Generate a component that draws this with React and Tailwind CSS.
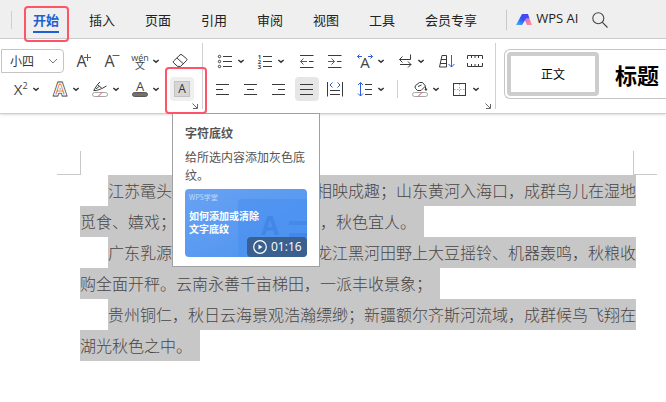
import { useState } from 'react';

const tabs = ['开始', '插入', '页面', '引用', '审阅', '视图', '工具', '会员专享'];

// '~' marks the part of a line that stays empty behind the tooltip
const paragraphs = [
  ['江苏鼋头~相映成趣;山东黄河入海口,成群鸟儿在湿地', '觅食、嬉戏;~,秋色宜人。'],
  ['广东乳源~龙江黑河田野上大豆摇铃、机器轰鸣,秋粮收', '购全面开秤。云南永善千亩梯田,一派丰收景象;'],
  ['贵州铜仁,秋日云海景观浩瀚缥缈;新疆额尔齐斯河流域,成群候鸟飞翔在', '湖光秋色之中。'],
];

const fullWidth = (text) => text.replace(/,/g, '\uFF0C').replace(/;/g, '\uFF1B');

const Line = ({ text, className }) => {
  const [before, after] = fullWidth(text).split('~');
  return (
    <span className={`block w-fit bg-[#c7c7c7] ${className}`}>
      {before}
      {after && <span className="inline-block w-36" />}
      {after}
    </span>
  );
};

const Icon = ({ children }) => (
  <svg className="h-6 w-6 shrink-0" viewBox="0 0 24 24" fill="none" stroke="#3a3a3a" strokeWidth="1" aria-hidden="true">
    {children}
  </svg>
);

const Letter = ({ x, y, size, children }) => (
  <text x={x} y={y} fontSize={size} textAnchor="middle" fill="#444" stroke="none" fontFamily="'Open Sans', sans-serif">
    {children}
  </text>
);

const Tool = ({ label, active, children }) => (
  <div className="flex h-7 w-7 shrink-0 items-center justify-center">
    <button type="button" aria-label={label} className={`h-6 w-6 rounded ${active ? 'bg-[#e6e6e6]' : ''}`}>
      <Icon>{children}</Icon>
    </button>
  </div>
);

const SplitTool = ({ label, children }) => (
  <button type="button" aria-label={label} className="flex h-7 w-10 shrink-0 items-center pl-0.5">
    <Icon>{children}</Icon>
    <svg className="h-2 w-2 shrink-0" viewBox="0 0 8 8" fill="none" stroke="#3a3a3a" strokeWidth="1.5" aria-hidden="true">
      <path d="M1.3 3 4 5.2 6.7 3" />
    </svg>
  </button>
);

const Launcher = ({ label }) => (
  <div className="flex justify-end pr-1">
    <button type="button" aria-label={label} className="h-1.5 w-1.5">
      <svg viewBox="0 0 6 6" className="h-1.5 w-1.5" fill="none" stroke="#666" aria-hidden="true">
        <path d="M.5 .5 5 5M5.5 1v4.5H1" />
      </svg>
    </button>
  </div>
);

const NoColorBar = () => (
  <>
    <rect x="4.5" y="15.5" width="15" height="4" rx="2" fill="#fff" stroke="#a5a5a5" />
    <path d="M10 19.5l4-4" stroke="#ee4a4a" />
  </>
);

const Tooltip = () => (
  <div role="tooltip" className="absolute top-[38px] left-1 z-20 w-[148px] border border-[#a0a0a0] bg-white px-3 pt-[11px] pb-[9px] text-xs text-[#555]">
    <div className="font-bold text-[#555]">字符底纹</div>
    <p className="mt-[7px] leading-[18px]">给所选内容添加灰色底纹。</p>
    <div className="relative mt-[5px] h-[68px] overflow-hidden rounded bg-linear-to-br from-[#68a2f3] to-[#4d93ee] pt-1 pl-1 text-white">
      <svg className="absolute inset-0 h-full w-full" viewBox="0 0 122 68" aria-hidden="true">
        <rect x="53" y="10" width="80" height="70" rx="4" fill="#4a90f0" opacity=".65" />
        <text x="76" y="46" fontSize="26" fontWeight="bold" fill="#3b80e4" opacity=".6" fontFamily="'Open Sans', sans-serif">A</text>
        <path d="M104 34h18M104 46h18" stroke="#3b80e4" strokeWidth="4" opacity=".5" />
      </svg>
      <div className="relative text-[7px] leading-2 opacity-60">WPS学堂</div>
      <div className="relative mt-2 text-[10px] leading-[13px] font-bold whitespace-nowrap">
        如何添加或清除
        <br />
        文字底纹
      </div>
      <div className="absolute right-0 bottom-0 flex h-5 w-[60px] items-center gap-1 rounded bg-[#3a608f] pl-1.5 font-['Open_Sans',sans-serif]">
        <svg className="h-3.5 w-3.5 shrink-0" viewBox="0 0 14 14" fill="none" stroke="#fff" aria-hidden="true">
          <circle cx="7" cy="7" r="6.3" strokeWidth="1.2" />
          <path d="M5.5 4.5v5L9.5 7z" fill="#fff" stroke="none" />
        </svg>
        01:16
      </div>
    </div>
  </div>
);

const FontGroup = ({ size, setSize }) => (
  <div className="flex shrink-0 flex-col pt-2">
    <div className="flex items-center">
      <div className="relative mr-1.5 flex items-center">
        <select
          aria-label="字号"
          value={size}
          onChange={(e) => setSize(e.target.value)}
          className="ml-px h-6 w-[63px] appearance-none rounded-r border border-[#c4c4c4] bg-white pl-2 text-xs text-[#333]"
        >
          <option>小四</option>
          <option>四号</option>
          <option>五号</option>
        </select>
        <svg className="pointer-events-none absolute right-1.5 h-2.5 w-2.5" viewBox="0 0 10 10" fill="none" stroke="#777" aria-hidden="true">
          <path d="M1 3l4 4 4-4" />
        </svg>
      </div>
      <Tool label="增大字号">
        <Letter x="9.5" y="18" size="16">A</Letter>
        <path d="M15.5 5v7M12 8.5h7" stroke="#2f5bd8" />
      </Tool>
      <Tool label="减小字号">
        <Letter x="9.5" y="18" size="16">A</Letter>
        <path d="M12.5 6.5h7" stroke="#2f5bd8" />
      </Tool>
      <SplitTool label="拼音指南">
        <Letter x="12" y="12" size="9">wén</Letter>
        <text x="12" y="20" fontSize="10" textAnchor="middle" fill="#444" stroke="none">文</text>
      </SplitTool>
      <Tool label="清除格式">
        <path d="M5.6 12 12 5.9q1-.9 2 0l4.6 3.8q.9.9 0 1.8L12.6 17.4h-3L5.6 13.8q-.9-.9 0-1.8zM9 9l6.2 5.6" />
      </Tool>
    </div>
    <div className="flex items-center pr-1 pl-1.5">
      <SplitTool label="上标">
        <Letter x="10" y="17.5" size="15">X</Letter>
        <Letter x="17" y="12" size="9">2</Letter>
      </SplitTool>
      <SplitTool label="文字效果">
        <text x="12" y="18" fontSize="16" fontWeight="bold" textAnchor="middle" fill="#444" strokeWidth="2.8" fontFamily="'Open Sans', sans-serif">A</text>
        <text x="12" y="18" fontSize="16" fontWeight="bold" textAnchor="middle" fill="#d9672c" stroke="#fff" strokeWidth="1.2" fontFamily="'Open Sans', sans-serif">A</text>
      </SplitTool>
      <SplitTool label="突出显示">
        <path d="M5.5 13.5h3l5-1.8M6 13 9.5 7.5l4.5 4M9.5 7.5 12 5M14 11.500l4.500-2.500M8 12l3-2.500" />
        <NoColorBar />
      </SplitTool>
      <SplitTool label="字体颜色">
        <Letter x="12" y="14" size="13">A</Letter>
        <rect x="4.5" y="15.5" width="15" height="4" rx="2" fill="#757070" stroke="#5c5858" />
      </SplitTool>
      <div className="relative mx-0.5 flex h-7 w-7 items-center justify-center">
        <button type="button" aria-label="字符底纹" className="flex h-6 w-6 items-center justify-center rounded bg-[#efefef]">
          <span className="h-4 w-4 border border-[#c2c2c2] bg-[#d6d6d6] font-['Open_Sans',sans-serif] text-xs leading-[14px] text-[#333]">A</span>
        </button>
        <div className="pointer-events-none absolute -top-2 -right-[11px] -bottom-[11px] -left-[3px] z-30 rounded-sm border-2 border-[#ff5468]" />
        <Tooltip />
      </div>
    </div>
    <Launcher label="字体设置" />
  </div>
);

const ParagraphGroup = () => (
  <div className="flex shrink-0 flex-col pt-2">
    <div className="flex items-center pr-1.5 pl-2">
      <SplitTool label="项目符号">
        <circle cx="6.5" cy="7.5" r="1.2" />
        <circle cx="6.5" cy="12.5" r="1.2" />
        <circle cx="6.5" cy="17.5" r="1.2" />
        <path d="M10 7.5h9M10 12.5h9M10 17.5h9" />
      </SplitTool>
      <SplitTool label="编号">
        <g fontWeight="bold">
          <Letter x="6.5" y="9.5" size="6">1</Letter>
          <Letter x="6.5" y="14.5" size="6">2</Letter>
          <Letter x="6.5" y="19.5" size="6">3</Letter>
        </g>
        <path d="M10 7.5h9M10 12.5h9M10 17.5h9" />
      </SplitTool>
      <div className="flex px-0.5">
        <Tool label="减少缩进量">
          <path d="M5 6.5h13.5M5 18.5h13.5M14 12.5h4.5" />
          <path d="M12 12.5H5.5M8.5 9.5l-3 3 3 3" stroke="#2f5bd8" />
        </Tool>
        <Tool label="增加缩进量">
          <path d="M5 6.5h13.5M5 18.5h13.5M14 12.5h4.5" />
          <path d="M5 12.5h6.5M8.5 9.5l3 3-3 3" stroke="#2f5bd8" />
        </Tool>
      </div>
      <SplitTool label="中文版式">
        <Letter x="12" y="19" size="15">A</Letter>
        <path d="M9 7.5H4.5M6.5 5.5l-2 2 2 2M15 7.5h4.5M17.5 5.5l2 2-2 2" stroke="#2f5bd8" />
      </SplitTool>
      <SplitTool label="换行标记">
        <path d="M17.5 5.5v5H6.5M9.5 7.5l-3 3 3 3M7 15.5h11M15 12.5l3 3-3 3" />
      </SplitTool>
      <div className="flex pl-0.5">
        <Tool label="排序">
          <path d="M4.5 18 7 6.5h4.5V18zM6 10.5h5.5M5.3 14.5h6" />
          <path d="M16.5 6v12M13.5 15l3 3 3-3" stroke="#2f5bd8" />
        </Tool>
        <Tool label="制表位">
          <path d="M4.5 10V6.5h15V10M4.5 14v3.5h15V14M8.5 6.5V9M12 6.5V9M15.5 6.500V9M8.500 15v2.500M12 15v2.500M15.500 15v2.500" />
        </Tool>
      </div>
    </div>
    <div className="flex items-center pl-1.5">
      <Tool label="左对齐">
        <path d="M5 7.5h13M5 12.5h7M5 17.5h13" />
      </Tool>
      <Tool label="居中对齐">
        <path d="M5 7.5h13M8 12.5h7M5 17.5h13" />
      </Tool>
      <Tool label="右对齐">
        <path d="M5 7.5h13M11 12.5h7M5 17.5h13" />
      </Tool>
      <Tool label="两端对齐" active>
        <path d="M5 7.5h13M5 12.5h13M5 17.5h13" />
      </Tool>
      <Tool label="分散对齐">
        <path d="M4.5 5v14.5M19.5 5v14.5M7 13.5h10M7 17.5h10" />
        <path d="M9.5 5.5 7 8l2.5 2.5M14.5 5.5 17 8l-2.5 2.5" stroke="#2f5bd8" />
      </Tool>
      <div className="flex pl-0.5">
        <SplitTool label="行距">
          <path d="M7.5 5.5V19M5 8l2.5-2.5L10 8M5 16.5 7.5 19l2.5-2.5" stroke="#2f5bd8" />
          <path d="M12 7.5h7M12 12.5h7M12 17.5h7" />
        </SplitTool>
      </div>
      <div className="mr-2 ml-1.5 h-[18px] w-px bg-[#d0d0d0]" />
      <SplitTool label="底纹颜色">
        <path d="M7.5 8.5l4-3h3l3 3.5-4.500 4.500h-3.500L7.500 11.500q-1-1.500 0-3zM10 9.500 13.500 8M17.500 9.500v3" />
        <circle cx="18" cy="12.5" r=".8" fill="#3a3a3a" />
        <NoColorBar />
      </SplitTool>
      <SplitTool label="边框">
        <path d="M11.5 7v11M6 12.5h11" stroke="#aaa" strokeDasharray="1.5 1.5" />
        <rect x="5.5" y="6.5" width="12" height="12" />
      </SplitTool>
    </div>
    <Launcher label="段落设置" />
  </div>
);

export default function App() {
  const [size, setSize] = useState('小四');

  return (
    <div className="min-h-screen overflow-x-clip bg-white font-['Noto_Sans_CJK_SC',sans-serif]">
      <nav className="flex h-[39px] items-center border-b border-[#cfcfcf] bg-[#efefef] pt-0.5 pl-[11px] text-[13px] text-[#222]">
        <div className="mr-[21px] h-[18px] w-px shrink-0 bg-[#cfcfcf]" />
        <div className="flex shrink-0 gap-[30px]">
          {tabs.map((tab, i) => (
            <button
              key={tab}
              type="button"
              className={`relative border-b-2 pt-[3px] pb-px leading-5 ${
                i === 0 ? 'border-[#1f5fd0] font-bold text-[#1f5fd0]' : 'border-transparent'
              }`}
            >
              {tab}
              {i === 0 && (
                <span className="pointer-events-none absolute -top-px -right-[10px] -bottom-[11px] -left-[9px] z-10 rounded-sm border-2 border-[#ff5468]" />
              )}
            </button>
          ))}
        </div>
        <div className="mr-[9px] ml-[29px] h-5 w-px shrink-0 bg-[#c8c8c8]" />
        <button type="button" className="flex shrink-0 items-center gap-1 pb-0.5 font-['Open_Sans',sans-serif]">
          <svg className="h-4 w-4" viewBox="0 0 16 16" aria-hidden="true">
            <defs>
              <linearGradient id="aiBlue" x1="0" y1="1" x2="1" y2="0">
                <stop offset="0" stopColor="#45b8ff" />
                <stop offset=".5" stopColor="#2c56f5" />
                <stop offset="1" stopColor="#5a3df0" />
              </linearGradient>
              <linearGradient id="aiPink" x1="0" y1="0" x2="1" y2="1">
                <stop offset="0" stopColor="#e05cf5" />
                <stop offset="1" stopColor="#ff9a7a" />
              </linearGradient>
            </defs>
            <path d="M8 7.5h5.5L16 14h-5z" fill="url(#aiPink)" />
            <path d="M6 3h6l1.5 4.500H10L6 14H0z" fill="url(#aiBlue)" />
          </svg>
          WPS AI
        </button>
        <button type="button" aria-label="搜索" className="ml-3.5 shrink-0">
          <svg className="h-4 w-4" viewBox="0 0 16 16" fill="none" stroke="#444" strokeWidth="1.1" aria-hidden="true">
            <circle cx="6.3" cy="6.3" r="5.5" />
            <path d="M10.2 10.2l5.3 5.3" />
          </svg>
        </button>
      </nav>

      <div className="flex h-[75px] border-b border-[#cfcfcf] bg-white shadow-sm">
        <FontGroup size={size} setSize={setSize} />
        <div className="my-1 w-px shrink-0 bg-[#d0d0d0]" />
        <ParagraphGroup />
        <div className="my-1 w-px shrink-0 bg-[#d0d0d0]" />
        <div className="mt-2.5 ml-2 flex min-w-0 flex-1 items-center gap-4 self-start overflow-hidden rounded-l-md border border-r-0 border-[#c5c5c5] p-0.5 text-black">
          <button type="button" className="h-11 w-[92px] shrink-0 rounded border-4 border-[#cdcdcd] text-xs">
            正文
          </button>
          <button type="button" className="shrink-0 text-[22px] leading-7 font-bold">
            标题
          </button>
        </div>
      </div>

      <main className="pt-[37px] pr-[9px] pl-[57px]">
        {/* page margin corners */}
        <div className="flex h-6 justify-between">
          <div className="w-6 border-r border-b border-[#c8c8c8]" />
          <div className="w-6 border-b border-l border-[#c8c8c8]" />
        </div>
        <div className="pl-[23px] text-base leading-[31px] font-light whitespace-nowrap text-[#4a4545]">
          {paragraphs.map(([first, rest]) => (
            <p key={first}>
              <Line text={first} className="ml-7" />
              <Line text={rest} className="pr-2" />
            </p>
          ))}
        </div>
      </main>
    </div>
  );
}
